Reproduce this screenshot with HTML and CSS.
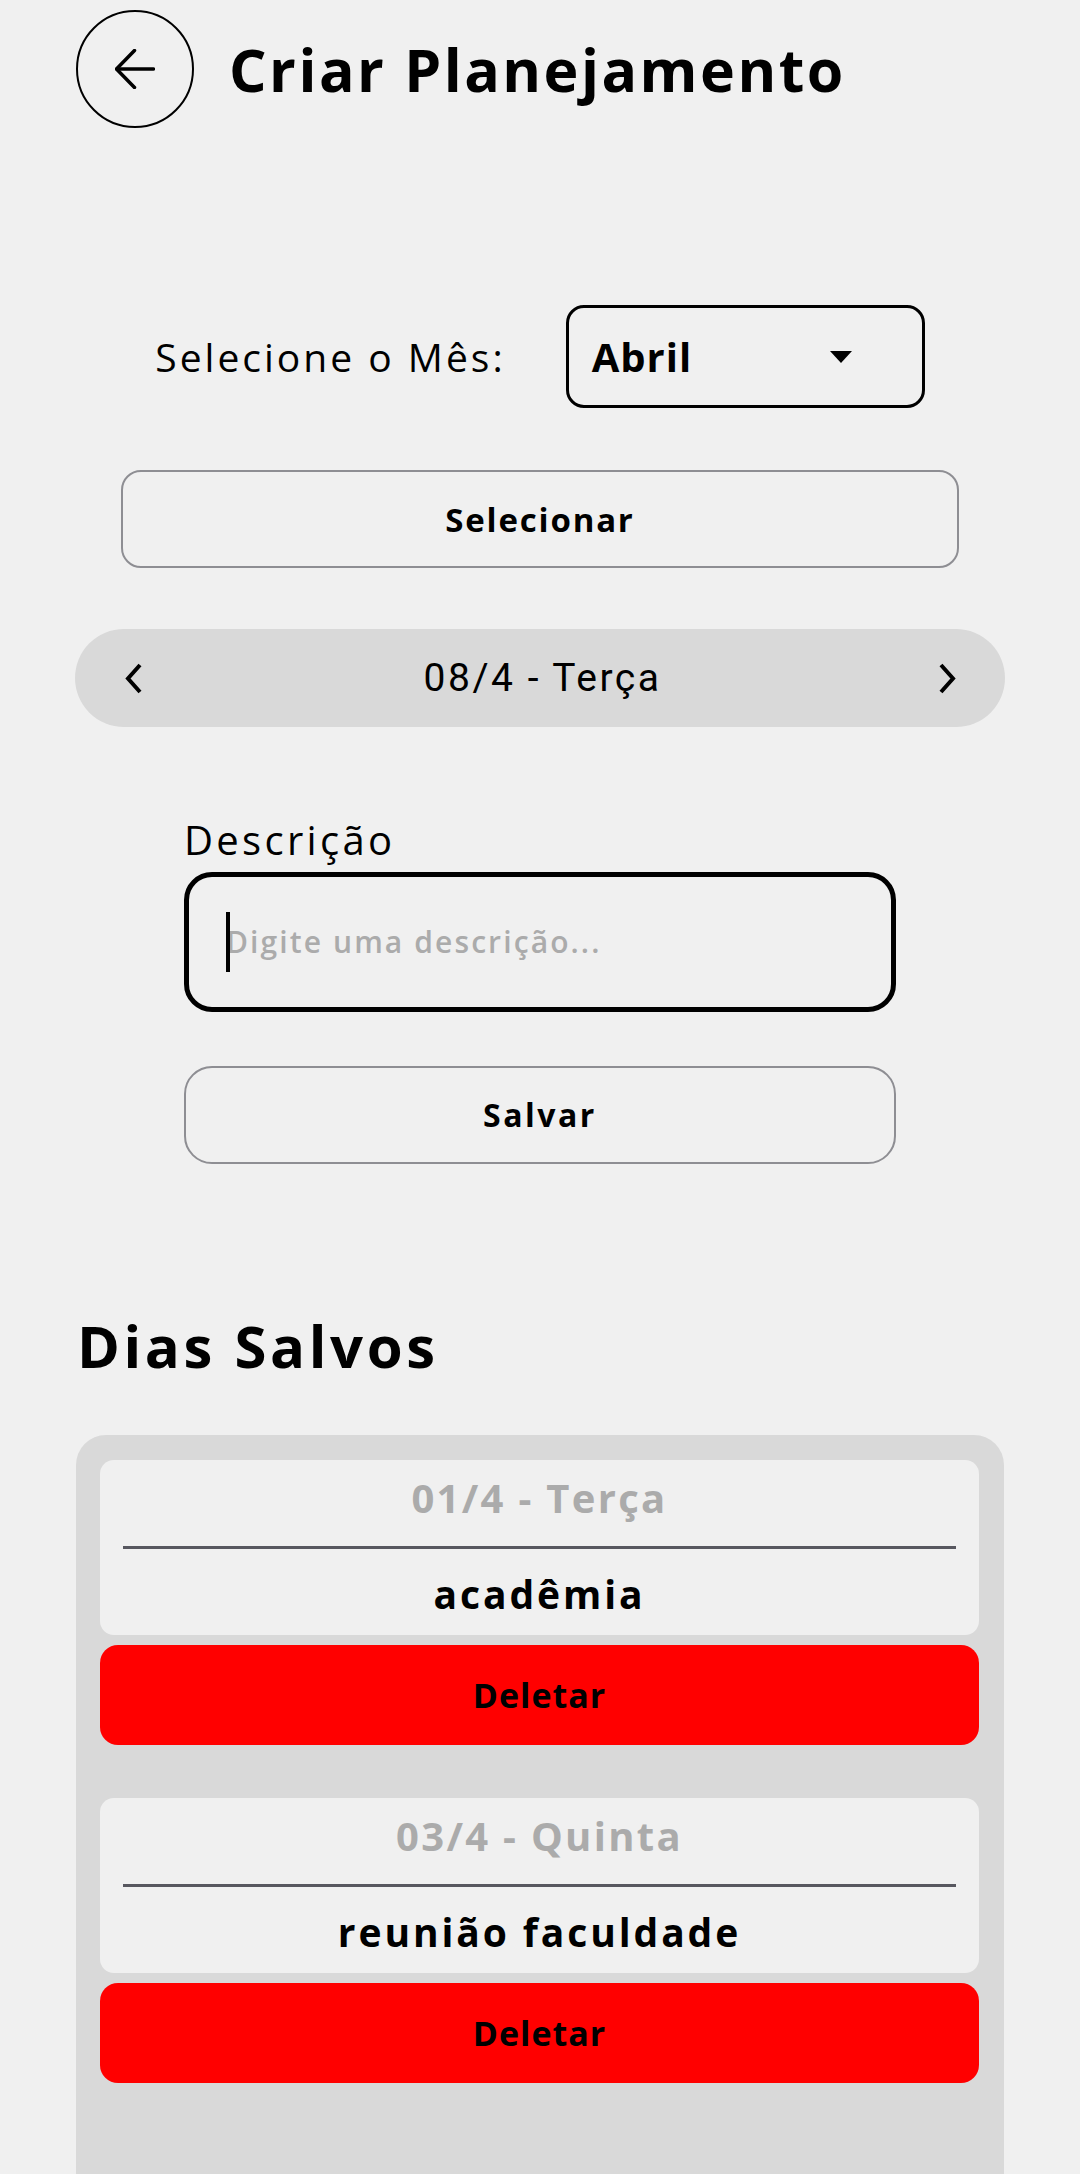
FILE: index.html
```html
<!DOCTYPE html>
<html lang="pt-BR">
<head>
<meta charset="utf-8">
<title>Criar Planejamento</title>
<link rel="stylesheet" href="styles.css">
</head>
<body>
<div class="page">
  <header class="header">
    <div class="back">
      <svg width="40" height="40" viewBox="0 0 40 40" fill="none" stroke="#000" stroke-width="3.5" stroke-linecap="round" stroke-linejoin="round">
        <polyline points="19.5,1.5 1.5,20 19.5,38.5"/>
        <line x1="2" y1="20" x2="38.5" y2="20"/>
      </svg>
    </div>
    <h1 class="title">Criar Planejamento</h1>
  </header>

  <div class="month-row">
    <span class="month-label">Selecione o Mês:</span>
    <div class="select">
      <span class="select-value">Abril</span>
      <span class="select-arrow"></span>
    </div>
  </div>

  <button class="btn btn-select">Selecionar</button>

  <div class="datebar">
    <svg class="chev" width="18" height="31" viewBox="0 0 18 31" fill="none" stroke="#000" stroke-width="4" stroke-linejoin="miter">
      <polyline points="15,2 3,15.5 15,29"/>
    </svg>
    <span class="datebar-text">08/4 - Terça</span>
    <svg class="chev" width="18" height="31" viewBox="0 0 18 31" fill="none" stroke="#000" stroke-width="4" stroke-linejoin="miter">
      <polyline points="3,2 15,15.5 3,29"/>
    </svg>
  </div>

  <div class="desc">
    <div class="desc-label">Descrição</div>
    <div class="input">
      <span class="cursor"></span><span class="placeholder">Digite uma descrição...</span>
    </div>
    <button class="btn btn-save">Salvar</button>
  </div>

  <h2 class="section-title">Dias Salvos</h2>

  <div class="saved">
    <div class="item">
      <div class="card">
        <div class="card-date">01/4 - Terça</div>
        <div class="card-line"></div>
        <div class="card-desc">acadêmia</div>
      </div>
      <button class="btn-delete">Deletar</button>
    </div>
    <div class="item">
      <div class="card">
        <div class="card-date">03/4 - Quinta</div>
        <div class="card-line"></div>
        <div class="card-desc">reunião faculdade</div>
      </div>
      <button class="btn-delete">Deletar</button>
    </div>
  </div>
</div>
</body>
</html>
```

FILE: styles.css
```css
* { box-sizing: border-box; }

html, body {
  margin: 0;
  padding: 0;
  background: #f0f0f0;
}

body {
  font-family: "Open Sans", "Noto Sans", Arial, sans-serif;
  color: #000;
  overflow: hidden;
}

.page {
  width: 1080px;
  display: flex;
  flex-direction: column;
}

/* Header */
.header {
  display: flex;
  align-items: center;
  padding: 10px 0 0 76px;
  gap: 35px;
}

.back {
  width: 118px;
  height: 118px;
  border: 2px solid #000;
  border-radius: 50%;
  display: flex;
  align-items: center;
  justify-content: center;
  flex-shrink: 0;
}

.title {
  margin: 0;
  font-size: 59px;
  line-height: 1;
  font-weight: 700;
  letter-spacing: 2.5px;
}

/* Month row */
.month-row {
  margin-top: 177px;
  display: flex;
  justify-content: center;
  align-items: center;
  gap: 60px;
}

.month-label {
  font-size: 39px;
  line-height: 1;
  font-weight: 400;
  letter-spacing: 3px;
}

.select {
  width: 359px;
  height: 103px;
  border: 3px solid #000;
  border-radius: 18px;
  display: flex;
  align-items: center;
  padding: 0 70px 0 23px;
  justify-content: space-between;
}

.select-value {
  font-size: 40px;
  line-height: 1;
  font-weight: 700;
  letter-spacing: 1px;
}

.select-arrow {
  width: 0;
  height: 0;
  border-left: 11px solid transparent;
  border-right: 11px solid transparent;
  border-top: 12px solid #000;
}

/* Buttons */
.btn {
  display: block;
  background: transparent;
  border: 2px solid #8e8e93;
  font-family: "Open Sans", "Noto Sans", Arial, sans-serif;
  font-weight: 700;
  color: #000;
  line-height: 1;
  padding: 0;
}

.btn-select {
  margin: 62px auto 0;
  width: 838px;
  height: 98px;
  border-radius: 20px;
  font-size: 33px;
  letter-spacing: 1.8px;
}

/* Date bar */
.datebar {
  margin: 61px auto 0;
  width: 930px;
  height: 98px;
  border-radius: 49px;
  background: #d9d9d9;
  display: flex;
  align-items: center;
  justify-content: space-between;
  padding: 0 49px 0 50px;
}

.datebar-text {
  font-family: Roboto, "Noto Sans", Arial, sans-serif;
  font-size: 39px;
  line-height: 1;
  letter-spacing: 2.5px;
  padding-left: 4px;
}

/* Description */
.desc {
  margin: 93px auto 0;
  width: 712px;
  display: flex;
  flex-direction: column;
}

.desc-label {
  font-size: 40px;
  line-height: 1;
  font-weight: 400;
  letter-spacing: 3.3px;
}

.input {
  margin-top: 12px;
  height: 140px;
  border: 5px solid #000;
  border-radius: 28px;
  display: flex;
  align-items: center;
  padding-left: 37px;
}

.cursor {
  display: inline-block;
  width: 4px;
  height: 60px;
  background: #000;
  margin-right: -4px;
  position: relative;
  z-index: 1;
}

.placeholder {
  font-size: 30px;
  line-height: 1;
  font-weight: 600;
  color: #ababab;
  letter-spacing: 2.1px;
}

.btn-save {
  margin-top: 54px;
  width: 712px;
  height: 98px;
  border-radius: 28px;
  font-size: 32px;
  letter-spacing: 2.5px;
}

/* Saved days */
.section-title {
  margin: 153px 0 0 77px;
  font-size: 58px;
  line-height: 1;
  font-weight: 700;
  letter-spacing: 3.6px;
}

.saved {
  margin: 60px 0 0 76px;
  width: 928px;
  background: #d9d9d9;
  border-radius: 30px 30px 0 0;
  padding: 25px 25px 200px 24px;
  display: flex;
  flex-direction: column;
  gap: 53px;
}

.item {
  display: flex;
  flex-direction: column;
  gap: 10px;
}

.card {
  background: #f0f0f0;
  border-radius: 14px;
  height: 175px;
  padding: 18px 23px 0;
  text-align: center;
}

.card-date {
  font-size: 40px;
  line-height: 1;
  font-weight: 700;
  color: #ababab;
  letter-spacing: 2.3px;
}

.card-line {
  margin-top: 28px;
  height: 3px;
  background: #57575f;
}

.card-desc {
  margin-top: 25px;
  font-size: 39px;
  line-height: 1;
  font-weight: 700;
  letter-spacing: 2.9px;
}

.btn-delete {
  display: block;
  width: 100%;
  height: 100px;
  border: none;
  border-radius: 18px;
  background: #ff0000;
  font-family: "Open Sans", "Noto Sans", Arial, sans-serif;
  font-size: 34px;
  line-height: 1;
  font-weight: 700;
  color: #000;
  padding: 0;
  letter-spacing: 1px;
}
```
